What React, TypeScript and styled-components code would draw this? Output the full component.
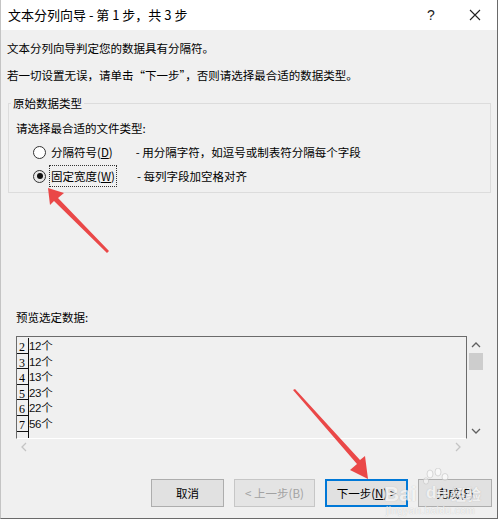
import React from 'react';
import styled, {createGlobalStyle} from 'styled-components';

const UI_FONT = `"Noto Sans CJK SC", "Noto Sans", sans-serif`;

const GlobalStyle = createGlobalStyle`
	html, body {
		margin: 0;
		padding: 0;
		background: #ffffff;
	}
	body {
		font-family: ${UI_FONT};
		color: #000;
	}
`;

const previewRows = [
	{no: '2', text: '12个'},
	{no: '3', text: '12个'},
	{no: '4', text: '13个'},
	{no: '5', text: '23个'},
	{no: '6', text: '22个'},
	{no: '7', text: '56个'},
	{no: '', text: ''},
];

function App() {
	return (
		<>
			<GlobalStyle />
			<Window>
				<TitleBar>
					<Title>文本分列向导 - 第 1 步，共 3 步</Title>
					<CaptionButton>?</CaptionButton>
					<CaptionButton>
						<svg width="12" height="12" viewBox="0 0 12 12">
							<path d="M1 1L11 11M11 1L1 11" stroke="#222" strokeWidth="1.1" />
						</svg>
					</CaptionButton>
				</TitleBar>
				<Body>
					<Line first>文本分列向导判定您的数据具有分隔符。</Line>
					<Line>若一切设置无误，请单击“下一步”，否则请选择最合适的数据类型。</Line>
					<Group>
						<Legend>原始数据类型</Legend>
						<Prompt>请选择最合适的文件类型:</Prompt>
						<RadioRow>
							<Radio />
							<RadioLabel>
								分隔符号(<u>D</u>)
							</RadioLabel>
							<RadioDesc gap={21}>- 用分隔字符，如逗号或制表符分隔每个字段</RadioDesc>
						</RadioRow>
						<RadioRow second>
							<Radio checked />
							<RadioLabel focused>
								固定宽度(<u>W</u>)
							</RadioLabel>
							<RadioDesc gap={20}>- 每列字段加空格对齐</RadioDesc>
						</RadioRow>
					</Group>
					<PreviewLabel>预览选定数据:</PreviewLabel>
					<Preview>
						<PreviewBox>
							{previewRows.map((r, i) => (
								<PreviewRow key={i}>
									<RowNo>{r.no}</RowNo>
									<RowText>{r.text}</RowText>
								</PreviewRow>
							))}
						</PreviewBox>
						<VScroll>
							<svg width="10" height="6" viewBox="0 0 10 6">
								<path d="M1 5L5 1L9 5" stroke="#606060" strokeWidth="1.3" fill="none" />
							</svg>
							<Thumb />
							<VSpacer />
							<svg width="10" height="6" viewBox="0 0 10 6">
								<path d="M1 1L5 5L9 1" stroke="#606060" strokeWidth="1.3" fill="none" />
							</svg>
						</VScroll>
						<HScroll>
							<svg width="6" height="10" viewBox="0 0 6 10">
								<path d="M5 1L1 5L5 9" stroke="#c4c4c4" strokeWidth="1.3" fill="none" />
							</svg>
							<svg width="6" height="10" viewBox="0 0 6 10">
								<path d="M1 1L5 5L1 9" stroke="#c4c4c4" strokeWidth="1.3" fill="none" />
							</svg>
						</HScroll>
					</Preview>
					<ButtonRow>
						<Button width={73}>取消</Button>
						<Button width={81} disabled>
							&lt; 上一步(B)
						</Button>
						<Button width={83} primary>
							下一步(<u>N</u>) &gt;
						</Button>
						<Button width={74}>完成(F)</Button>
					</ButtonRow>
				</Body>
				<Watermark>
					<WmBai>Bai</WmBai>
					<WmPaw>
						<svg width="30" height="26" viewBox="0 0 30 26">
							<g fill="rgba(255,255,255,0.7)" stroke="#c4c4c4" strokeWidth="0.8">
								<ellipse cx="8" cy="6" rx="3" ry="4" />
								<ellipse cx="16" cy="4" rx="3" ry="4" />
								<ellipse cx="23" cy="9" rx="3" ry="3.5" />
								<ellipse cx="4" cy="13" rx="2.6" ry="3.2" />
							</g>
						</svg>
						<WmDu>du</WmDu>
					</WmPaw>
					<WmJy>经验</WmJy>
					<WmUrl>jingyan.baidu.com</WmUrl>
				</Watermark>
				<Annotations width="498" height="519" viewBox="0 0 498 519">
					<path d="M47 188 L63 193 L57 198 L108 251 L106 253 L53 201 L49 205 Z" fill="#ea4848" />
					<path d="M367 479 L349 470 L356 464 L292 390 L294 389 L359 460 L364 456 Z" fill="#ea4848" />
				</Annotations>
			</Window>
		</>
	);
}

export default App;

const Window = styled.div`
	position: relative;
	box-sizing: border-box;
	width: 498px;
	height: 519px;
	display: flex;
	flex-direction: column;
	border-left: 1px solid #c4c4c4;
	border-right: 1px solid #6a6a6a;
	border-bottom: 1px solid #6a6a6a;
	background: #f0f0f0;
	overflow: hidden;
`;

const TitleBar = styled.div`
	display: flex;
	align-items: center;
	height: 30px;
	background: #ffffff;
	padding-left: 7px;
`;

const Title = styled.div`
	flex: 1;
	font-size: 13px;
	line-height: 30px;
	color: #000;
	white-space: nowrap;
`;

const CaptionButton = styled.div`
	width: 44px;
	height: 30px;
	display: flex;
	align-items: center;
	justify-content: center;
	font-family: "Liberation Sans", sans-serif;
	font-size: 14px;
	color: #222;
`;

const Body = styled.div`
	flex: 1;
	display: flex;
	flex-direction: column;
	padding: 0 6px;
	font-size: 11.5px;
`;

const Line = styled.div<{first?: boolean}>`
	margin-top: ${(p) => (p.first ? 8 : 7)}px;
	line-height: 20px;
	white-space: nowrap;
`;

const Group = styled.fieldset`
	margin: 10px 0 0 1px;
	padding: 0 0 5px 7px;
	border: 1px solid #dcdcdc;
	min-width: 0;
`;

const Legend = styled.legend`
	margin-left: -5px;
	padding: 0 2px;
	line-height: 16px;
	font-size: 11.5px;
	color: #000;
`;

const Prompt = styled.div`
	margin-top: 7px;
	line-height: 20px;
`;

const RadioRow = styled.div<{second?: boolean}>`
	display: flex;
	align-items: center;
	height: 22px;
	margin-top: ${(p) => (p.second ? 2 : 3)}px;
	padding-left: 17px;
`;

const Radio = styled.span<{checked?: boolean}>`
	position: relative;
	box-sizing: border-box;
	width: 13px;
	height: 13px;
	border-radius: 50%;
	border: 1px solid #333;
	background: ${(p) => (p.checked ? '#e8e8e8' : '#fff')};
	flex-shrink: 0;
	&::after {
		content: '';
		display: ${(p) => (p.checked ? 'block' : 'none')};
		position: absolute;
		left: 2.5px;
		top: 2.5px;
		width: 6px;
		height: 6px;
		border-radius: 50%;
		background: #111;
	}
`;

const RadioLabel = styled.span<{focused?: boolean}>`
	margin-left: 3px;
	padding: 1px 1px;
	line-height: 18px;
	border: 1px dotted ${(p) => (p.focused ? '#333' : 'transparent')};
	white-space: nowrap;
`;

const RadioDesc = styled.span<{gap: number}>`
	margin-left: ${(p) => p.gap}px;
	white-space: nowrap;
`;

const PreviewLabel = styled.div`
	margin: 114px 0 0 9px;
	line-height: 20px;
`;

const Preview = styled.div`
	display: grid;
	grid-template-columns: 451px 18px;
	grid-template-rows: 103px 16px;
	margin: 9px 0 0 9px;
`;

const PreviewBox = styled.div`
	box-sizing: border-box;
	border: 1px solid #6b6b6b;
	border-bottom-color: #ffffff;
	padding-top: 1px;
	overflow: hidden;
`;

const PreviewRow = styled.div`
	display: flex;
	height: 15.6px;
`;

const RowNo = styled.div`
	box-sizing: border-box;
	width: 12px;
	border-right: 1px solid #111;
	border-bottom: 1px solid #111;
	font-family: "Liberation Serif", serif;
	font-size: 12px;
	line-height: 12px;
	padding: 3px 0 0 2px;
	color: #000;
`;

const RowText = styled.div`
	font-size: 11.5px;
	line-height: 14px;
	padding-top: 1px;
	color: #111;
	font-family: "Liberation Sans", ${UI_FONT};
	letter-spacing: -0.3px;
`;

const VScroll = styled.div`
	display: flex;
	flex-direction: column;
	align-items: center;
	padding: 6px 0 5px;
`;

const Thumb = styled.div`
	width: 14px;
	height: 17px;
	margin-top: 5px;
	background: #cdcdcd;
`;

const VSpacer = styled.div`
	flex: 1;
`;

const HScroll = styled.div`
	grid-column: 1 / 2;
	display: flex;
	align-items: center;
	justify-content: space-between;
	padding: 0 6px 0 5px;
`;

const ButtonRow = styled.div`
	display: flex;
	justify-content: flex-end;
	gap: 10px;
	margin-top: 24px;
	margin-right: -1px;
`;

const Button = styled.div<{width: number; primary?: boolean; disabled?: boolean}>`
	box-sizing: border-box;
	width: ${(p) => p.width}px;
	height: 28px;
	display: flex;
	align-items: center;
	justify-content: center;
	font-size: 11.5px;
	white-space: nowrap;
	background: ${(p) => (p.disabled ? '#e4e4e4' : '#e1e1e1')};
	color: ${(p) => (p.disabled ? '#a2a2a2' : '#000')};
	border: ${(p) =>
		p.primary ? '2px solid #0078d7' : `1px solid ${p.disabled ? '#c6c6c6' : '#adadad'}`};
`;

const Watermark = styled.div`
	position: absolute;
	left: 383px;
	top: 466px;
	width: 100px;
	height: 50px;
	pointer-events: none;
	opacity: 0.75;
	font-family: "Liberation Sans", sans-serif;
	color: rgba(255, 255, 255, 0.9);
	text-shadow: 0 0 1px #a8a8a8;
`;

const WmBai = styled.span`
	position: absolute;
	left: 0;
	top: 16px;
	font-size: 21px;
	font-weight: bold;
`;

const WmPaw = styled.div`
	position: absolute;
	left: 38px;
	top: 2px;
	width: 30px;
	height: 36px;
`;

const WmDu = styled.span`
	position: absolute;
	left: 4px;
	top: 15px;
	font-size: 17px;
	font-weight: bold;
`;

const WmJy = styled.span`
	position: absolute;
	left: 67px;
	top: 17px;
	font-family: ${UI_FONT};
	font-size: 15px;
	font-weight: bold;
`;

const WmUrl = styled.span`
	position: absolute;
	left: 2px;
	top: 39px;
	font-size: 10px;
	letter-spacing: 0.5px;
`;

const Annotations = styled.svg`
	position: absolute;
	left: 0;
	top: 0;
	pointer-events: none;
`;
